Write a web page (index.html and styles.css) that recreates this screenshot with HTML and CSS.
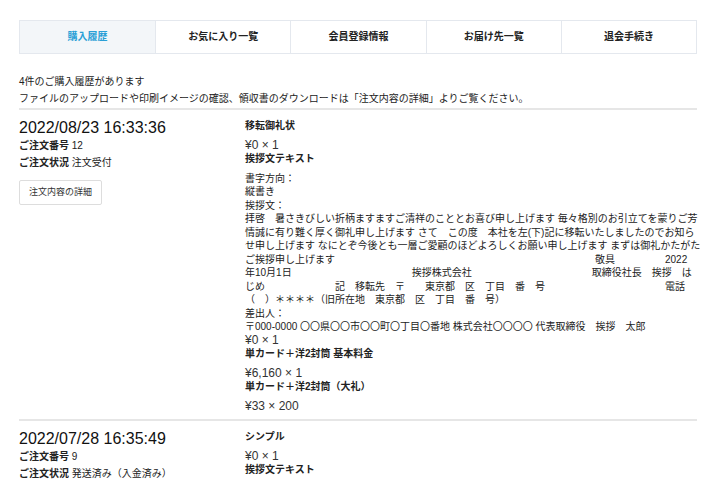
FILE: index.html
```html
<!DOCTYPE html>
<html lang="ja">
<head>
  <meta charset="UTF-8">
  <meta name="viewport" content="width=device-width, initial-scale=1.0">
  <title>購入履歴</title>
  <link rel="stylesheet" href="styles.css">
</head>
<body>
  <div class="page">
    <nav class="tabs">
      <a class="tab active" href="#">購入履歴</a>
      <a class="tab" href="#">お気に入り一覧</a>
      <a class="tab" href="#">会員登録情報</a>
      <a class="tab" href="#">お届け先一覧</a>
      <a class="tab" href="#">退会手続き</a>
    </nav>

    <div class="intro">
      <p>4件のご購入履歴があります</p>
      <p>ファイルのアップロードや印刷イメージの確認、領収書のダウンロードは「注文内容の詳細」よりご覧ください。</p>
    </div>

    <section class="order">
      <div class="order-meta">
        <div class="order-date">2022/08/23 16:33:36</div>
        <p><b>ご注文番号</b> 12</p>
        <p><b>ご注文状況</b> 注文受付</p>
        <a class="detail-btn" href="#">注文内容の詳細</a>
      </div>
      <div class="order-items">
        <div class="item-name">移転御礼状</div>
        <div class="item-price">¥0 × 1</div>
        <div class="item-name">挨拶文テキスト</div>
        <div class="item-text">
          書字方向：<br>
          縦書き<br>
          挨拶文：<br>
          拝啓　暑さきびしい折柄ますますご清祥のこととお喜び申し上げます 毎々格別のお引立てを蒙りご芳<br>
          情誠に有り難く厚く御礼申し上げます さて　この度　本社を左(下)記に移転いたしましたのでお知ら<br>
          せ申し上げます なにとぞ今後とも一層ご愛顧のほどよろしくお願い申し上げます まずは御礼かたがた<br>
          ご挨拶申し上げます　　　　　　　　　　　　　　　　　　　　　　　　　　敬具　　　　　2022<br>
          年10月1日　　　　　　　　　　　　挨拶株式会社　　　　　　　　　　　　取締役社長　挨拶　は<br>
          じめ　　　　　　　記　移転先　〒　　東京都　区　丁目　番　号　　　　　　　　　　　　電話<br>
          （　）＊＊＊＊（旧所在地　東京都　区　丁目　番　号）<br>
          差出人：<br>
          〒000-0000 〇〇県〇〇市〇〇町〇丁目〇番地 株式会社〇〇〇〇 代表取締役　挨拶　太郎
        </div>
        <div class="item-price">¥0 × 1</div>
        <div class="item-name">単カード＋洋2封筒 基本料金</div>
        <div class="item-price">¥6,160 × 1</div>
        <div class="item-name">単カード＋洋2封筒（大礼）</div>
        <div class="item-price">¥33 × 200</div>
      </div>
    </section>

    <section class="order">
      <div class="order-meta">
        <div class="order-date">2022/07/28 16:35:49</div>
        <p><b>ご注文番号</b> 9</p>
        <p><b>ご注文状況</b> 発送済み（入金済み）</p>
        <a class="detail-btn" href="#">注文内容の詳細</a>
      </div>
      <div class="order-items">
        <div class="item-name">シンプル</div>
        <div class="item-price">¥0 × 1</div>
        <div class="item-name">挨拶文テキスト</div>
      </div>
    </section>
  </div>
</body>
</html>
```

FILE: styles.css
```css
body {
  margin: 0;
  font-family: "Liberation Sans", "Noto Sans CJK JP", sans-serif;
  font-size: 10px;
  color: #222;
  background: #fff;
}

p {
  margin: 0;
}

.page {
  width: 678px;
  padding: 20px 0 0 19px;
}

.tabs {
  display: grid;
  grid-template-columns: repeat(5, 1fr);
  border: 1px solid #e4e8ee;
}

.tab {
  display: block;
  height: 32px;
  line-height: 32px;
  text-align: center;
  font-weight: bold;
  color: #222;
  text-decoration: none;
  border-left: 1px solid #e4e8ee;
}

.tab:first-child {
  border-left: none;
}

.tab.active {
  background: #f3f6f9;
  color: #2a9fd6;
}

.intro {
  margin-top: 19px;
  padding-bottom: 1px;
  line-height: 17px;
  border-bottom: 2px solid #e6e6e6;
}

.order {
  display: grid;
  grid-template-columns: 226px 1fr;
  padding: 9px 0 6px;
  border-bottom: 2px solid #e6e6e6;
}

.order-meta {
  line-height: 17px;
}

.order-date {
  font-size: 16px;
  line-height: 18px;
  color: #111;
}

.detail-btn {
  display: inline-block;
  margin-top: 9px;
  padding: 0 9px;
  height: 23px;
  line-height: 23px;
  font-size: 9px;
  color: #333;
  text-decoration: none;
  border: 1px solid #ddd;
  border-radius: 2px;
}

.order-items {
  line-height: 13.5px;
}

.item-name {
  font-weight: bold;
  margin-bottom: 6px;
}

.item-price {
  font-size: 12px;
  color: #333;
}

.item-text {
  white-space: nowrap;
}
```
